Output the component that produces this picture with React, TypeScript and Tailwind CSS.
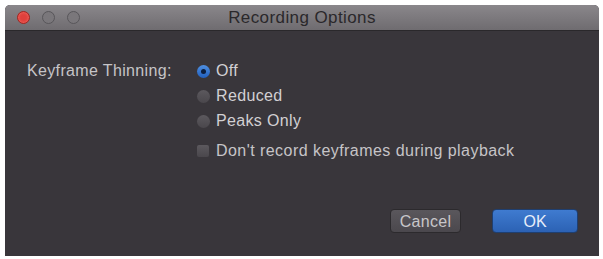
export default function App() {
  const font = { fontFamily: '"Liberation Sans", Arial, sans-serif' };
  return (
    <div className="w-[603px] h-[259px] bg-white pt-[5px] pl-[5px]" style={font}>
      <div className="w-[594px] h-[251px] rounded-t-[5px] overflow-hidden bg-[#39363b] flex flex-col">
        {/* Title bar */}
        <div className="relative h-[26px] bg-gradient-to-b from-[#8a878b] to-[#6f6c70] border-b border-[#2a282b] flex items-center justify-center">
          <div className="absolute left-[12px] top-[6px] flex gap-[12px]">
            <span className="w-[13px] h-[13px] rounded-full bg-[#e0403c] border border-[#a02622] shadow-[inset_0_0_3px_rgba(255,140,130,0.7)]" />
            <span className="w-[13px] h-[13px] rounded-full border border-[#58565a] bg-[#7a777b]" />
            <span className="w-[13px] h-[13px] rounded-full border border-[#58565a] bg-[#7a777b]" />
          </div>
          <span className="text-[17px] tracking-[0.4px] text-[#2a282b] leading-none">Recording Options</span>
        </div>

        {/* Body */}
        <div className="flex-1 flex flex-col pl-[22px] pr-[21px] pt-[31px]">
          <div className="flex">
            <div className="w-[170px] h-[18px] text-[16px] tracking-[0.35px] text-[#c6c4c7] leading-[18px]">Keyframe Thinning:</div>
            <div className="flex flex-col gap-[7px]">
              {[
                { label: "Off", on: true },
                { label: "Reduced", on: false },
                { label: "Peaks Only", on: false },
              ].map((o) => (
                <div key={o.label} className="flex items-center gap-[6px] h-[18px]">
                  {o.on ? (
                    <span className="w-[13px] h-[13px] rounded-full bg-gradient-to-b from-[#4f8fe0] to-[#2060c0] flex items-center justify-center">
                      <span className="w-[5px] h-[5px] rounded-full bg-[#0b1f40]" />
                    </span>
                  ) : (
                    <span className="w-[13px] h-[13px] rounded-full bg-gradient-to-b from-[#5c595e] to-[#4a474c]" />
                  )}
                  <span className="text-[16px] tracking-[0.35px] leading-[18px] text-[#d2d0d3]">{o.label}</span>
                </div>
              ))}
            </div>
          </div>
          <div className="flex items-center gap-[7px] h-[18px] ml-[170px] mt-[12px]">
            <span className="w-[12px] h-[12px] rounded-[2px] bg-gradient-to-b from-[#5c595e] to-[#4a474c]" />
            <span className="text-[16px] tracking-[0.45px] leading-[18px] text-[#c6c4c7]">Don&apos;t record keyframes during playback</span>
          </div>
          <div className="flex justify-end gap-[31px] mt-[49px]">
            <button className="w-[71px] h-[24px] rounded-[4px] bg-gradient-to-b from-[#5a575c] to-[#4b484d] border border-[#2c2a2d] text-[16px] tracking-[0.3px] text-[#c8c6c9]">
              Cancel
            </button>
            <button className="w-[86px] h-[24px] rounded-[4px] bg-gradient-to-b from-[#3f7bd0] to-[#2c62b4] border border-[#1f3f70] text-[16px] text-[#e6eefa]">
              OK
            </button>
          </div>
        </div>
      </div>
    </div>
  );
}
